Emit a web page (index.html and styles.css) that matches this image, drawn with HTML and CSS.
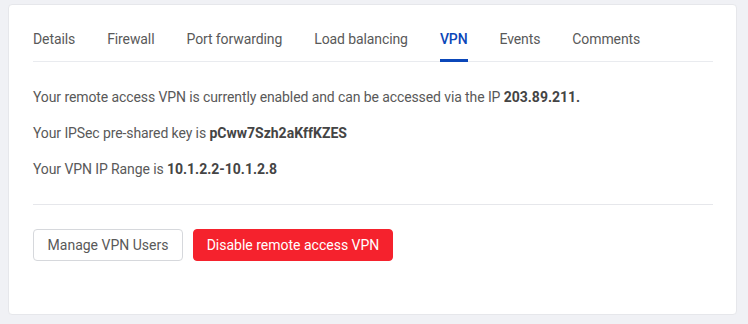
FILE: index.html
```html
<!DOCTYPE html>
<html lang="en">
<head>
<meta charset="utf-8">
<title>VPN</title>
<link rel="stylesheet" href="styles.css">
</head>
<body>
<div class="card">
  <nav class="tabs">
    <a class="tab">Details</a>
    <a class="tab">Firewall</a>
    <a class="tab">Port forwarding</a>
    <a class="tab">Load balancing</a>
    <a class="tab active">VPN</a>
    <a class="tab">Events</a>
    <a class="tab">Comments</a>
  </nav>
  <section class="info">
    <p>Your remote access VPN is currently enabled and can be accessed via the IP <b>203.89.211.</b></p>
    <p>Your IPSec pre-shared key is <b>pCww7Szh2aKffKZES</b></p>
    <p>Your VPN IP Range is <b>10.1.2.2-10.1.2.8</b></p>
  </section>
  <div class="actions">
    <button class="btn btn-default">Manage VPN Users</button>
    <button class="btn btn-danger">Disable remote access VPN</button>
  </div>
</div>
</body>
</html>
```

FILE: styles.css
```css
* { box-sizing: border-box; }
html, body { margin: 0; }
body {
  background: #f0f1f5;
  padding: 4px 11px 9px 8px;
  font-family: Roboto, "Noto Sans", sans-serif;
  font-size: 14px;
  color: #595959;
}
.card {
  background: #fff;
  border: 1px solid #e6e7eb;
  border-radius: 4px;
  height: 311px;
  padding: 15px 23px 0 24px;
}
.tabs {
  display: flex;
  gap: 32px;
  border-bottom: 1px solid #e9ebef;
}
.tab {
  line-height: 20px;
  padding: 9px 0 10px;
  border-bottom: 3px solid transparent;
  margin-bottom: -1px;
  color: #595959;
  letter-spacing: -0.1px;
  cursor: pointer;
}
.tab.active {
  color: #0b47b9;
  font-weight: 500;
  border-bottom-color: #0b47b9;
}
.info {
  padding: 25px 0 25px;
  border-bottom: 1px solid #e6e7eb;
}
.info p {
  margin: 0 0 16px;
  line-height: 20px;
  letter-spacing: -0.1px;
}
.info p:last-child { margin-bottom: 0; }
.info b {
  font-weight: 700;
  color: #444;
  letter-spacing: 0;
}
.actions {
  display: flex;
  gap: 10px;
  padding-top: 24px;
}
.btn {
  height: 32px;
  padding: 0;
  border-radius: 4px;
  font-family: inherit;
  font-size: 14px;
  white-space: nowrap;
  cursor: pointer;
}
.btn-default {
  width: 150px;
  background: #fff;
  border: 1px solid #d6d8dc;
  color: #595959;
}
.btn-danger {
  width: 200px;
  background: #f5222d;
  border: 1px solid #f5222d;
  color: #fff;
}
```
